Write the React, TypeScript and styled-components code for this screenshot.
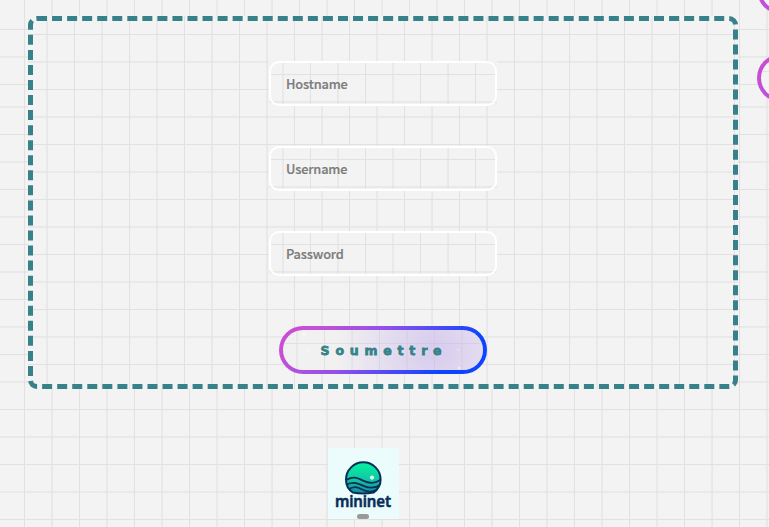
import React from "react";
import styled, { createGlobalStyle, css } from "styled-components";

const lines = (angle: number) =>
  `linear-gradient(${angle}deg, transparent 24%, #e1e1e1 25%, #e1e1e1 26%, transparent 27%, transparent 74%, #e1e1e1 75%, #e1e1e1 76%, transparent 77%, transparent)`;

const grid = css`
  background-color: #f3f3f3;
  background-image: ${lines(0)}, ${lines(90)};
  background-size: 55px 55px;
`;

const rim = "linear-gradient(137deg, #d04bd0 0%, #c050d8 18%, #8f51ea 42%, #0f44ff 80%)";
const star = (x: number, y: number, a: number) =>
  `radial-gradient(circle at ${x}px ${y}px, rgba(255,255,255,${a}) 0.8px, transparent 1.8px) padding-box`;

const Global = createGlobalStyle`
  * { box-sizing: border-box; }
  body { margin: 0; overflow: hidden; }
`;

const Page = styled.main`
  ${grid}
  background-position: -17px 11px;
  position: relative;
  height: 527px;
  overflow: hidden;
  display: grid;
  grid-template-columns: 710px 1fr;
  grid-template-rows: 373px auto;
  column-gap: 19px;
  row-gap: 59px;
  padding: 16px 0 0 28px;
  font-family: "Noto Sans", sans-serif;

  &::before {
    content: "";
    position: absolute;
    inset: 0 0 auto;
    height: 95px;
    background-color: #f3f3f3;
    background-image: ${lines(0)}, ${lines(0)}, ${lines(90)};
    background-size: 55px 55px;
    background-position: -17px 16px, -17px 71px, -17px 0;
    background-repeat: repeat-x, repeat-x, repeat;
  }
`;

const Panel = styled.form`
  ${grid}
  position: relative;
  border: 5px dashed #37828a;
  border-radius: 9px;
  display: flex;
  flex-direction: column;
  align-items: center;
  padding-top: 40px;
  gap: 40px;
`;

const Field = styled.label`
  ${grid}
  display: flex;
  flex: none;
  width: 228px;
  height: 45px;
`;

const Input = styled.input`
  width: 100%;
  border: 2px solid #fff;
  border-radius: 10px;
  background: transparent;
  padding: 0 15px;
  font: 500 12.8px "Noto Sans CJK JP", "Noto Sans", sans-serif;
  letter-spacing: -0.15px;
  outline: none;
  &::placeholder { color: #7c7c7c; opacity: 1; -webkit-text-stroke: 0.2px #7c7c7c; }
`;

const Pill = styled.button`
  flex: none;
  width: 208px;
  height: 48px;
  border: 4px solid transparent;
  border-radius: 24px;
  background: ${lines(0)} padding-box, ${lines(90)} padding-box,
    linear-gradient(#f3f3f3, #f3f3f3) padding-box, ${rim} border-box;
  background-size: 55px 55px, 55px 55px, auto, auto;
`;

const Submit = styled(Pill)`
  margin-top: 10px;
  background: ${star(21, 4, 0.7)}, ${star(25, 20, 0.4)}, ${star(175, 20, 0.25)}, ${star(176, 38, 0.5)},
    radial-gradient(ellipse 100px 90px at 152px 20px, #c5b0eb99, #c5b0eb00) padding-box,
    ${lines(0)} padding-box, ${lines(90)} padding-box,
    linear-gradient(#f1f1f1, #f1f1f1) padding-box, ${rim} border-box;
  background-size: auto, auto, auto, auto, auto, 55px 55px, 55px 55px, auto, auto;
  color: #37828a;
  font: 700 12.5px "DejaVu Sans", sans-serif;
  letter-spacing: 5.8px;
  -webkit-text-stroke: 0.8px #37828a;
  text-shadow: 0 0 4px #ffffffaa;
  padding: 0 0 0 2px;
`;

const Side = styled.nav`
  position: relative;
  display: flex;
  flex-direction: column;
  gap: 40px;
  margin: -50px -200px 0 0;
`;

const Brand = styled.footer`
  position: relative;
  width: 71px;
  height: 71px;
  margin-left: 300px;
`;

const orb = "M25 44C20 41 18 36 18 31A17.3 17.3 0 0 1 52.6 31C52.6 36 50 41 45.5 44Q35 46 25 44Z";

const Logo = () => (
  <svg width="71" height="71" viewBox="0 0 71 71">
    <defs>
      <linearGradient id="sea" x1="0" y1="0" x2="0" y2="1">
        <stop offset="0" stopColor="#02f59e" />
        <stop offset="0.5" stopColor="#12c9a3" />
        <stop offset="1" stopColor="#1a7fa0" />
      </linearGradient>
      <clipPath id="orb"><path d={orb} /></clipPath>
    </defs>
    <rect width="71" height="71" rx="3" fill="#ecfbfc" />
    <g transform="translate(0 0.600)">
      <g clipPath="url(#orb)">
        <rect x="17" y="13" width="36" height="34" fill="url(#sea)" />
        <g fill="none" stroke="#062f57" strokeWidth="1.8">
          <path d="M17 32C25 27 29 29 35 32S47 36 54 30" />
          <path d="M17 36.500C26 32 30 35 36 37.500S47 40 53 36" />
          <path d="M20 41C28 36 31 40 37 42S46 43 51 40" />
        </g>
      </g>
      <path d={orb} fill="none" stroke="#062f57" strokeWidth="2" />
      <circle cx="44" cy="29" r="2.1" fill="#d0fff0" />
    </g>
    <text transform="translate(7 59) scale(1 1.06)" textLength="56" lengthAdjust="spacing"
      fill="#062f57" stroke="#062f57" strokeWidth="0.5" strokeLinejoin="round"
      fontFamily="Noto Sans" fontWeight="600" fontSize="15">mininet</text>
    <rect x="29" y="66" width="12" height="5" rx="2.5" fill="#999" />
  </svg>
);

export default function App() {
  return (
    <>
      <Global />
      <Page>
        <Panel>
          {["Hostname", "Username", "Password"].map((name) => (
            <Field key={name}>
              <Input placeholder={name} type={name === "Password" ? "password" : "text"} />
            </Field>
          ))}
          <Submit type="button">Soumettre</Submit>
        </Panel>
        <Side>
          <Pill type="button" />
          <Pill type="button" />
        </Side>
        <Brand><Logo /></Brand>
      </Page>
    </>
  );
}
